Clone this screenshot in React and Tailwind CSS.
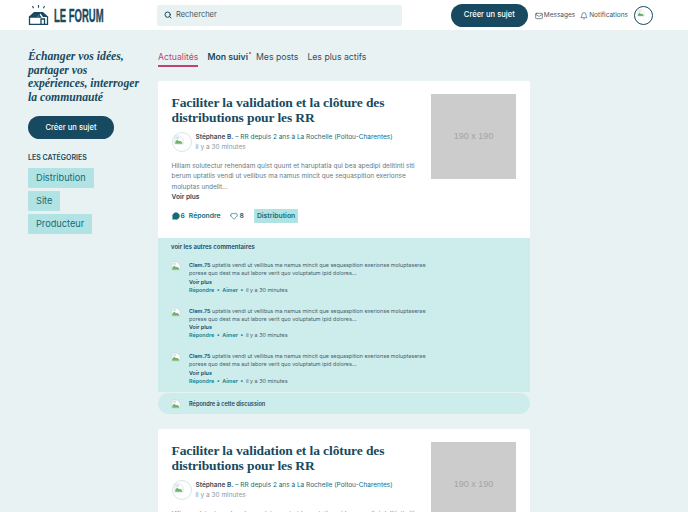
import { Search, Mail, Bell, MessageCircle, Heart } from "lucide-react";

const LOREM_POST =
  "Hiliam solutectur rehendam quist quunt et haruptatia qui bea apedipi delitinti siti berum uptatiis vendi ut vellibus ma namus mincit que sequaspition exerionse moluptas undelit...";
const LOREM_COMMENT =
  "uptatiis vendi ut vellibus ma namus mincit que sequaspition exerionse moluptaserae porese quo dest ma aut labore verit quo voluptatum ipid dolores...";

const SERIF = "font-['Liberation_Serif',serif]";

function BrokenImage({ size = 10 }) {
  return (
    <svg width={size} height={size} viewBox="0 0 16 16" className="block shrink-0">
      <path d="M1.500 1.500h8l5 5v8h-13z" fill="#fff" stroke="#ccd3d6" />
      <path d="M2 14v-3l3-4 3 3 2-1 3 3v2z" fill="#6db36d" />
      <path d="M3 3h5v3H3z" fill="#d3e0f2" />
    </svg>
  );
}

function Logo() {
  return (
    <div className="flex items-center gap-[5px]">
      <svg width="21" height="20" viewBox="0 0 21 20" className="block shrink-0">
        <path d="M0.500 12 L6 7 H15 L20.500 12 H15 L12.500 8.500 L9 12 Z" fill="#174a60" />
        <path d="M1 12h11.500l-2.500-3.500M1.500 12v7.500h18V12M13 19.500V14h3.500v5.500" fill="none" stroke="#174a60" strokeWidth="1.300" />
        <path d="M4.500 1l1 2.200M10.500 0v2.800M16.500 1l-1 2.200" stroke="#174a60" strokeWidth="1.100" />
      </svg>
      <span className="inline-block origin-left scale-x-[0.5] whitespace-nowrap font-['Liberation_Sans',sans-serif] text-[19px] leading-none font-bold text-[#174a60] [-webkit-text-stroke:0.4px_#174a60]">
        LE FORUM
      </span>
    </div>
  );
}

function CreateButton({ className }) {
  return (
    <button className={`rounded-full bg-[#174a60] text-[7.600px] font-medium text-white ${className}`}>
      Créer un sujet
    </button>
  );
}

function Header() {
  return (
    <header className="flex h-[30px] items-center bg-white pl-[28px] pr-[35px]">
      <div className="w-[129px]">
        <Logo />
      </div>
      <div className="flex h-[21px] w-[245px] items-center gap-[4px] rounded-[2px] bg-[#e8f2f3] px-[7px] text-[7.500px] text-[#3d5660]">
        <Search size={8} strokeWidth={3} className="text-[#174a60]" />
        Rechercher
      </div>
      <CreateButton className="ml-auto h-[23px] w-[77px]" />
      <div className="ml-[7px] flex items-center gap-[1px] pt-px text-[6.500px] text-[#3d5660]">
        <Mail size={8} />
        Messages
      </div>
      <div className="ml-[5px] flex items-center gap-[1px] pt-px text-[6.500px] text-[#3d5660]">
        <Bell size={8} />
        Notifications
      </div>
      <div className="ml-[6px] h-[19px] w-[19px] rounded-full border border-[#174a60] pl-[2px] pt-[2px]">
        <BrokenImage size={8} />
      </div>
    </header>
  );
}

function Sidebar() {
  return (
    <aside className="w-[129px] shrink-0">
      <p className={`${SERIF} whitespace-nowrap text-[11.700px] leading-[13.500px] font-bold italic text-[#174a60]`}>
        Échanger vos idées,
        <br />
        partager vos
        <br />
        expériences, interroger
        <br />
        la communauté
      </p>
      <CreateButton className="mt-[12px] h-[23px] w-[86px]" />
      <h3 className="mt-[14px] text-[7px] leading-[10px] font-semibold text-[#174a60]">LES CATÉGORIES</h3>
      <div className="mt-[5px] flex flex-col items-start gap-[3px]">
        {["Distribution", "Site", "Producteur"].map((c) => (
          <span key={c} className="rounded-[1px] bg-[#b2e3e4] px-[8px] py-[3px] text-[9.200px] leading-[14px] text-[#136b78]">
            {c}
          </span>
        ))}
      </div>
    </aside>
  );
}

function Tabs() {
  return (
    <nav className="flex items-start text-[8.700px] leading-[14px] text-[#33505c]">
      <span className="border-b-2 border-[#c2426f] pb-px text-[#c2426f]">Actualités</span>
      <span className="relative ml-[9px] font-semibold text-[#174a60]">
        Mon suivi
        <span className="absolute -right-[3px] top-[2px] h-[2px] w-[2px] rounded-full bg-[#c2426f]" />
      </span>
      <span className="ml-[8px]">Mes posts</span>
      <span className="ml-[9px]">Les plus actifs</span>
    </nav>
  );
}

function PostBody() {
  return (
    <div className="flex justify-between pb-[15px] pl-[13.500px] pr-[14px] pt-[13px]">
      <div className="w-[250px]">
        <h2 className={`${SERIF} mt-[1px] text-[13.500px] leading-[15px] font-bold tracking-[-0.1px] text-[#174a60]`}>
          Faciliter la validation et la clôture des
          <br />
          distributions pour les RR
        </h2>
        <div className="mt-[7px] flex items-center gap-[4px]">
          <div className="h-[20px] w-[20px] shrink-0 rounded-full border border-[#d5e6e8] pl-[1px] pt-[2px]">
            <BrokenImage />
          </div>
          <div className="text-[6.500px] leading-[10px]">
            <div className="whitespace-nowrap text-[#136b78]">
              <span className="font-semibold text-[#33505c]">Stéphane B.</span> – RR depuis 2 ans à La Rochelle (Poitou-Charentes)
            </div>
            <div className="text-[#8a979c]">il y a 30 minutes</div>
          </div>
        </div>
        <p className="mt-[9px] text-[6.470px] leading-[10.300px] text-[#667a82]">{LOREM_POST}</p>
        <div className="text-[6.600px] leading-[10px] font-semibold text-[#174a60]">Voir plus</div>
        <div className="mt-[7px] flex items-center text-[6.800px] font-semibold text-[#136b78]">
          <MessageCircle size={8} fill="#136b78" />
          <span className="ml-[1px]">6</span>
          <span className="ml-[4px]">Répondre</span>
          <Heart size={8} className="ml-[9px]" />
          <span className="ml-[2px]">8</span>
          <span className="ml-[10px] rounded-[1px] bg-[#b2e3e4] px-[3px] py-[2px]">Distribution</span>
        </div>
      </div>
      <div className="flex h-[85px] w-[85px] shrink-0 items-center justify-center bg-[#cccccc] pt-px font-['Liberation_Sans',sans-serif] text-[9px] text-[#a5a5a5]">
        190 x 190
      </div>
    </div>
  );
}

function Comment() {
  return (
    <div className="flex gap-[6px]">
      <div className="w-[12px] shrink-0">
        <BrokenImage />
      </div>
      <div className="w-[240px] text-[5.400px] leading-[8.300px] text-[#46606a]">
        <span className="font-semibold text-[#174a60]">Clem.75</span> {LOREM_COMMENT}
        <div className="font-semibold text-[#174a60]">Voir plus</div>
        <div className="text-[#14808c]">
          <span className="font-semibold">Répondre</span> <span className="mx-[1px]">•</span>{" "}
          <span className="font-semibold">Aimer</span> <span className="mx-[1px]">•</span>{" "}
          <span className="text-[#46606a]">il y a 30 minutes</span>
        </div>
      </div>
    </div>
  );
}

function FullPost() {
  return (
    <article>
      <div className="rounded-t-[2px] bg-white">
        <PostBody />
      </div>
      <div className="bg-[#cdecec] px-[13px] pb-[7px] pt-[5px]">
        <div className="text-[6px] leading-[8px] font-semibold text-[#174a60]">voir les autres commentaires</div>
        <div className="mt-[10px] flex flex-col gap-[12.300px]">
          <Comment />
          <Comment />
          <Comment />
        </div>
      </div>
      <div className="mt-px flex h-[21px] items-center gap-[6px] rounded-[11px] bg-[#cdecec] px-[13px] text-[5.600px] font-semibold text-[#174a60]">
        <div className="w-[12px] shrink-0">
          <BrokenImage />
        </div>
        Répondre à cette discussion
      </div>
    </article>
  );
}

export default function App() {
  return (
    <div className="h-[512px] overflow-hidden bg-[#e8f2f3] font-['Inter',sans-serif]">
      <Header />
      <main className="flex pl-[28px] pt-[20px]">
        <Sidebar />
        <div className="ml-[1px] w-[372px]">
          <Tabs />
          <div className="mt-[14px]">
            <FullPost />
            <article className="mt-[15px] rounded-[2px] bg-white">
              <PostBody />
            </article>
          </div>
        </div>
      </main>
    </div>
  );
}
